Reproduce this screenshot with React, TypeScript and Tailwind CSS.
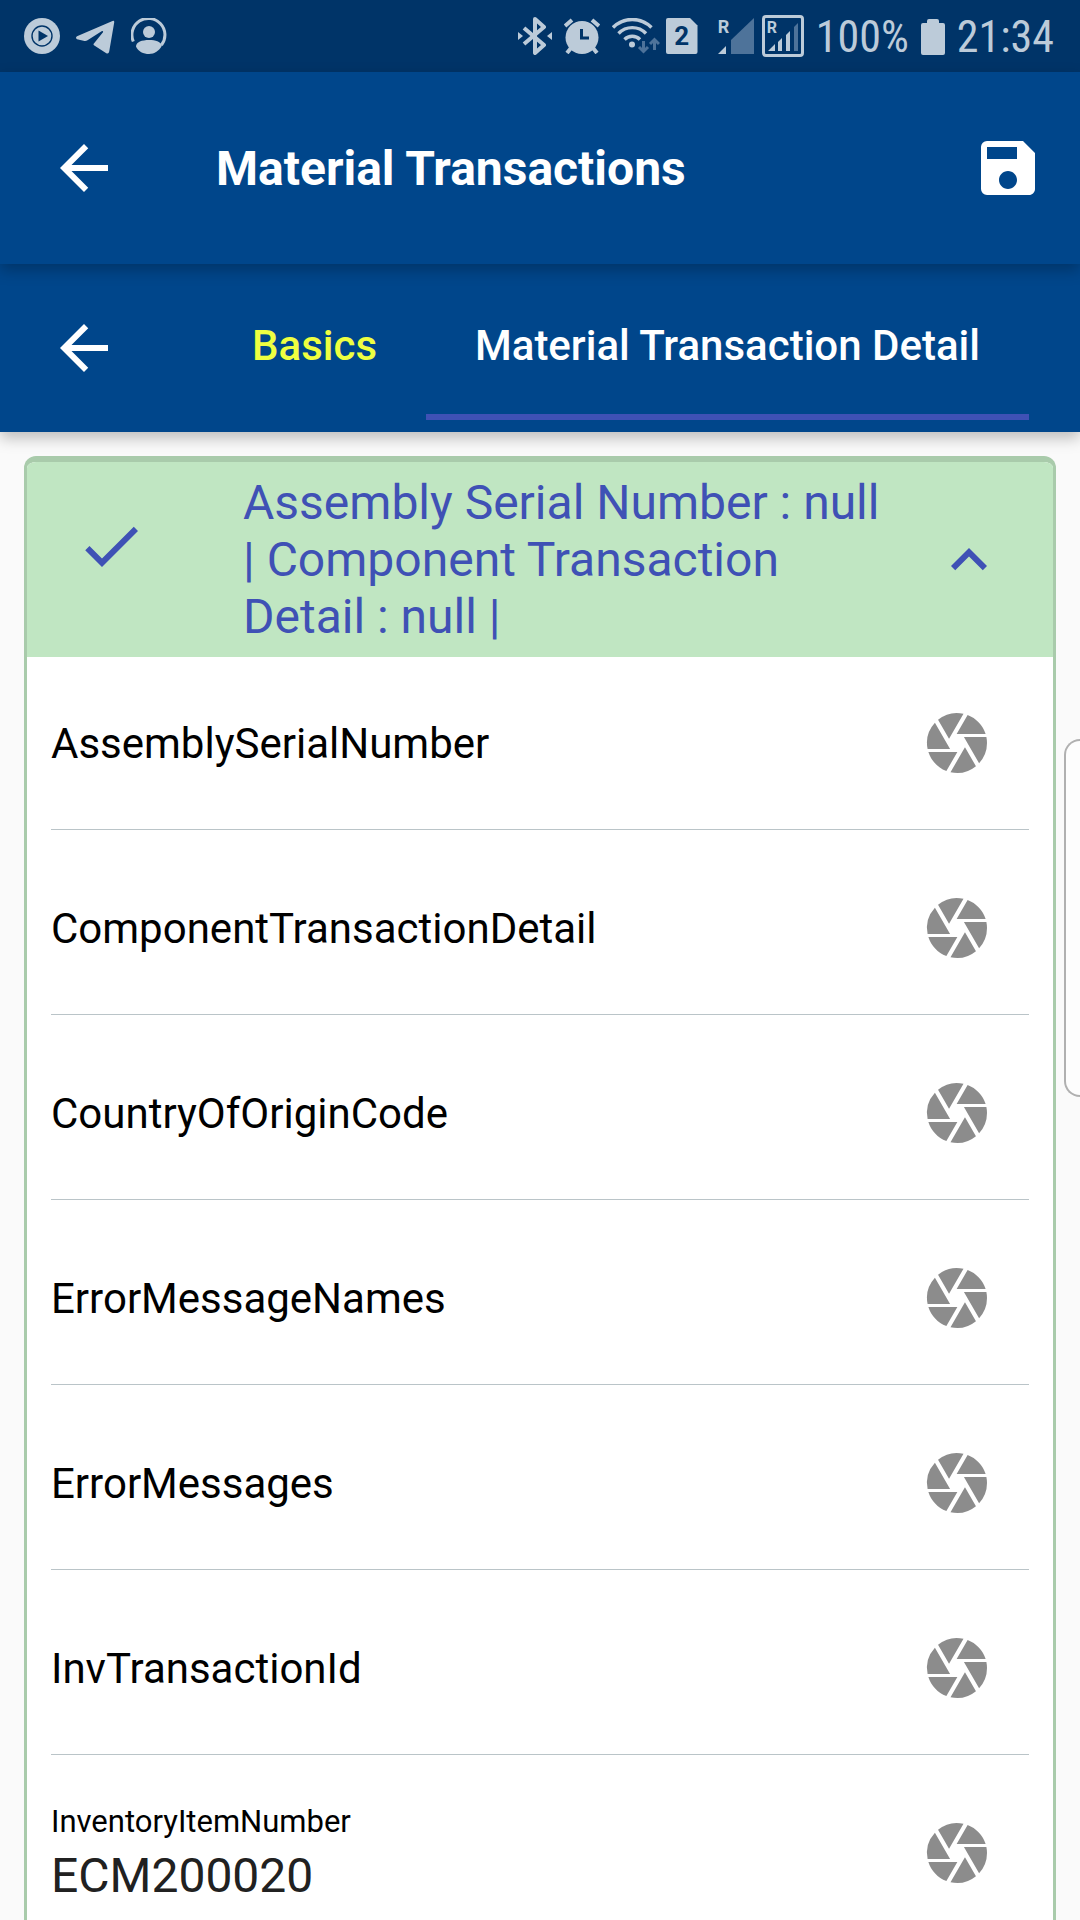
import React from "react";
import { MdArrowBack, MdCamera, MdCheck, MdExpandLess, MdSave } from "react-icons/md";

type Field = { id: string; label: string; value?: string };

const fields: Field[] = [
  { id: "assembly", label: "AssemblySerialNumber" },
  { id: "component", label: "ComponentTransactionDetail" },
  { id: "country", label: "CountryOfOriginCode" },
  { id: "errorNames", label: "ErrorMessageNames" },
  { id: "errors", label: "ErrorMessages" },
  { id: "invId", label: "InvTransactionId" },
  { id: "itemNumber", label: "InventoryItemNumber", value: "ECM200020" },
];

function PlayCircleIcon() {
  return (
    <svg className="h-9 w-9" viewBox="0 0 36 36" aria-hidden="true">
      <circle cx="18" cy="18" r="18" fill="#bccbd9" />
      <circle cx="18" cy="18" r="10" fill="none" stroke="#003468" strokeWidth="1.4" />
      <path d="M14.5 12.5v11l9.5-5.5z" fill="#003468" />
    </svg>
  );
}

function TelegramIcon() {
  return (
    <svg className="h-9 w-[39px]" viewBox="0 0 39 36" aria-hidden="true">
      <path
        d="M1 18.2 36.5 3q2-.7 1.7 1.4L33.2 33.6q-.5 2.6-2.9 1.6L18.3 27.6q-1.500-1-.2-2.300L27 14.300q.5-1.900-1.400-1L11.500 22.300q-1.400.9-3 .6L1 21.200q-2-1.500 0-3z"
        fill="#bccbd9"
      />
    </svg>
  );
}

function PersonIcon() {
  return (
    <svg className="h-9 w-9" viewBox="0 0 36 36" aria-hidden="true">
      <path d="M2.300 23.500A16.500 16.500 0 1 1 30.500 27" fill="none" stroke="#bccbd9" strokeWidth="3" />
      <circle cx="18" cy="14" r="6" fill="#bccbd9" />
      <path d="M5 28.500c0-4.500 6-6.500 13-6.500s11 1.500 13 5.500C28 33 23.500 36 18 36S7 33.500 5 28.500z" fill="#bccbd9" />
    </svg>
  );
}

function BluetoothIcon() {
  return (
    <svg className="h-[38px] w-[34px]" viewBox="0 0 34 38" aria-hidden="true">
      <path d="m6 11 20 17-9 8V2l9 8L6 27" fill="none" stroke="#bccbd9" strokeWidth="4" strokeLinejoin="round" />
      <path d="m0 15 5 4-5 4zM34 15l-5 4 5 4z" fill="#bccbd9" />
    </svg>
  );
}

function AlarmIcon() {
  return (
    <svg className="h-9 w-9" viewBox="0 0 36 36" aria-hidden="true">
      <path d="m1 8 7-6M35 8l-7-6M7 30l-4 5M29 30l4 5" stroke="#bccbd9" strokeWidth="4" />
      <circle cx="18" cy="19.500" r="16.500" fill="#bccbd9" />
      <path d="M17.500 11v9H25" fill="none" stroke="#003468" strokeWidth="3" />
    </svg>
  );
}

function WifiIcon() {
  return (
    <svg className="h-9 w-12" viewBox="0 0 48 36" aria-hidden="true">
      <g fill="none" stroke="#bccbd9" strokeWidth="3.400">
        <path d="M1 9.500a27 27 0 0 1 38.500 0" />
        <path d="M6.500 15.500a19 19 0 0 1 27.500 0" />
        <path d="M12.500 21.500a11 11 0 0 1 15.500 0" />
      </g>
      <circle cx="20" cy="26.500" r="3" fill="#bccbd9" />
      <path d="M31.500 23v10M27 29l4.500 4.500L36 29M42.500 32V22M38 26l4.500-4.500L47 26" fill="none" stroke="#4e739a" strokeWidth="3" />
    </svg>
  );
}

function SimIcon() {
  return (
    <span className="relative flex h-9 w-8 items-center justify-center">
      <svg className="absolute inset-0 h-9 w-8" viewBox="0 0 32 36" aria-hidden="true">
        <path d="M2 0h22l7.500 7.500V34q0 2-2 2H2q-2 0-2-2V2q0-2 2-2z" fill="#bccbd9" />
      </svg>
      <span className="relative text-[26px] leading-none font-bold text-[#003468]">2</span>
    </span>
  );
}

function SignalIcon() {
  return (
    <span className="relative h-9 w-9">
      <svg className="h-9 w-9" viewBox="0 0 36 36" aria-hidden="true">
        <path d="M36 0v36H13V22z" fill="#4e739a" />
        <path d="M0 36h8v-8z" fill="#bccbd9" />
      </svg>
      <span className="absolute top-0 left-0 text-lg leading-[18px] font-bold">R</span>
    </span>
  );
}

function BoxedSignalIcon() {
  return (
    <span className="relative h-[42px] w-[42px] rounded-sm border-3 border-[#bccbd9]">
      <svg className="h-9 w-9" viewBox="0 0 36 36" aria-hidden="true">
        <path d="M3 33h7v-7zM13 24l4-4v13h-4zM21 17l4-4v20h-4z" fill="#bccbd9" />
        <path d="m29 9 4-4v28h-4z" fill="#4e739a" />
      </svg>
      <span className="absolute top-0 left-0.5 text-base leading-5 font-bold">R</span>
    </span>
  );
}

function BatteryIcon() {
  return (
    <svg className="h-9 w-6" viewBox="0 0 24 36" aria-hidden="true">
      <path d="M8 0h8q2 0 2 2v2h4q2 0 2 2v28q0 2-2 2H2q-2 0-2-2V6q0-2 2-2h4V2q0-2 2-2z" fill="#bccbd9" />
    </svg>
  );
}

function StatusBar() {
  return (
    <div className="flex h-[72px] shrink-0 items-center justify-between bg-[#003468] pr-[26px] pl-6 text-[#bccbd9]">
      <div className="flex items-center gap-4">
        <PlayCircleIcon />
        <TelegramIcon />
        <PersonIcon />
      </div>
      <div className="flex items-center">
        <div className="mr-1.5 flex items-center gap-3">
          <BluetoothIcon />
          <AlarmIcon />
          <WifiIcon />
        </div>
        <SimIcon />
        <div className="mr-3 ml-5 flex items-center gap-2">
          <SignalIcon />
          <BoxedSignalIcon />
        </div>
        <div className="flex items-center gap-3 pt-0.5 font-['Roboto_Condensed',Roboto,sans-serif] text-[44px] leading-[48px]">
          <span>100%</span>
          <BatteryIcon />
          <time>21:34</time>
        </div>
      </div>
    </div>
  );
}

function FieldRow({ field }: { field: Field }) {
  const filled = field.value !== undefined;
  return (
    <div className="flex h-[173px] shrink-0 items-center border-b border-[#bac4c8] pr-9">
      {filled ? (
        <div className="flex min-w-0 flex-1 flex-col gap-1.5 pt-1">
          <label htmlFor={field.id} className="text-[31px] leading-9 text-black">
            {field.label}
          </label>
          <input
            id={field.id}
            defaultValue={field.value}
            className="h-[60px] w-full bg-transparent text-5xl leading-[60px] text-[#212121] outline-none"
          />
        </div>
      ) : (
        <div className="grid min-w-0 flex-1 items-center pt-0.5">
          <label htmlFor={field.id} className="col-start-1 row-start-1 text-[42px] leading-[60px] text-black">
            {field.label}
          </label>
          <input id={field.id} className="col-start-1 row-start-1 h-[60px] w-full bg-transparent text-5xl outline-none" />
        </div>
      )}
      <button type="button" aria-label={"Scan " + field.label} className="text-[#8c8c8c]">
        <MdCamera className="size-[72px]" />
      </button>
    </div>
  );
}

export default function App() {
  return (
    <div className="relative flex h-screen flex-col overflow-hidden bg-[#fafafa] font-[Roboto,sans-serif]">
      <StatusBar />

      <header className="relative z-20 flex h-48 shrink-0 items-center bg-[#00468b] px-12 pr-9 text-white shadow-[0_6px_14px_rgba(0,0,0,0.25)]">
        <button type="button" aria-label="Back">
          <MdArrowBack className="size-[72px]" />
        </button>
        <h1 className="ml-24 flex-1 pt-0.5 text-5xl font-bold">Material Transactions</h1>
        <button type="button" aria-label="Save">
          <MdSave className="size-[72px]" />
        </button>
      </header>

      <nav className="relative z-10 flex h-[168px] shrink-0 items-center bg-[#00468b] px-12 text-white shadow-[0_6px_14px_rgba(0,0,0,0.25)]">
        <button type="button" aria-label="Previous tab">
          <MdArrowBack className="size-[72px]" />
        </button>
        <div role="tablist" className="ml-[83px] flex h-36 text-[42px] font-medium">
          <button type="button" role="tab" aria-selected={false} className="border-b-6 border-transparent px-[49px] text-[#eeff41]">
            Basics
          </button>
          <button type="button" role="tab" aria-selected={true} className="border-b-6 border-[#3f51b5] px-[49px] whitespace-nowrap">
            Material Transaction Detail
          </button>
        </div>
      </nav>

      <main className="flex min-h-0 flex-1 flex-col px-6 pt-6">
        <section className="min-h-0 flex-1 overflow-hidden rounded-t-xl border-x-3 border-t-6 border-[#a9cbab] bg-white">
          <button
            type="button"
            aria-expanded={true}
            className="flex w-full items-center bg-[#c0e6c2] px-12 py-3 text-left text-[#3f51b5]"
          >
            <MdCheck className="mt-9 size-[72px] shrink-0 self-start" />
            <span className="mr-12 ml-24 flex-1 text-5xl leading-[57px]">
              Assembly Serial Number : null | Component Transaction Detail : null |
            </span>
            <MdExpandLess className="size-[72px] shrink-0" />
          </button>
          <form className="flex flex-col gap-3 px-6">
            {fields.map((field) => (
              <FieldRow key={field.id} field={field} />
            ))}
          </form>
        </section>
      </main>

      <div className="absolute top-[739px] right-0 z-30 h-[358px] w-4 rounded-l-[18px] border-2 border-r-0 border-[#b0b0b0] bg-[#fdfdfd]" />
    </div>
  );
}
